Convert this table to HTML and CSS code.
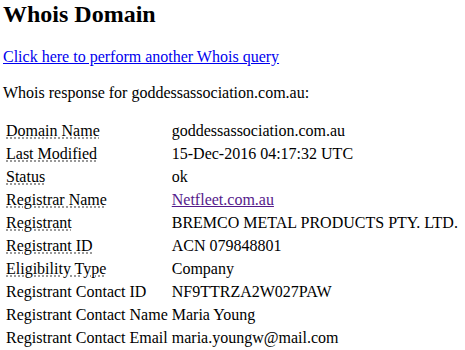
FILE: index.html
```html
<!DOCTYPE html>
<html lang="en">
<head>
<meta charset="utf-8">
<title>Whois Domain</title>
<link rel="stylesheet" href="styles.css">
</head>
<body class="page">
<h1 class="title">Whois Domain</h1>
<p class="query"><a class="query-link" href="#">Click here to perform another Whois query</a></p>
<p class="intro">Whois response for goddessassociation.com.au:</p>
<table class="whois">
<tbody>
<tr><td class="key"><abbr class="term" title="Domain Name">Domain Name</abbr></td><td class="val">goddessassociation.com.au</td></tr>
<tr><td class="key"><abbr class="term" title="Last Modified">Last Modified</abbr></td><td class="val">15-Dec-2016 04:17:32 UTC</td></tr>
<tr><td class="key"><abbr class="term" title="Status">Status</abbr></td><td class="val">ok</td></tr>
<tr><td class="key"><abbr class="term" title="Registrar Name">Registrar Name</abbr></td><td class="val"><a class="visited-link" href="#">Netfleet.com.au</a></td></tr>
<tr><td class="key"><abbr class="term" title="Registrant">Registrant</abbr></td><td class="val">BREMCO METAL PRODUCTS PTY. LTD.</td></tr>
<tr><td class="key"><abbr class="term" title="Registrant ID">Registrant ID</abbr></td><td class="val">ACN 079848801</td></tr>
<tr><td class="key"><abbr class="term" title="Eligibility Type">Eligibility Type</abbr></td><td class="val">Company</td></tr>
<tr><td class="key">Registrant Contact ID</td><td class="val">NF9TTRZA2W027PAW</td></tr>
<tr><td class="key">Registrant Contact Name</td><td class="val">Maria Young</td></tr>
<tr><td class="key">Registrant Contact Email</td><td class="val">maria.youngw@mail.com</td></tr>
</tbody>
</table>
</body>
</html>
```
FILE: styles.css
```css
html, body {
  background: #ffffff;
}
.page {
  margin: 0;
  padding: 0 3px;
  font-family: "Liberation Serif", "Times New Roman", serif;
  font-size: 16px;
  color: #000000;
}
.title {
  margin: 0 0 20px;
  padding-top: 1px;
  font-size: 24px;
  line-height: 26px;
  font-weight: bold;
}
.query {
  margin: 0 0 17px;
  line-height: 19px;
}
.query-link {
  color: #0000ee;
  text-decoration: underline;
}
.intro {
  margin: 0 0 16px;
  line-height: 19px;
}
.whois {
  border-collapse: separate;
  border-spacing: 2px;
  margin-left: 0;
}
.whois td {
  padding: 1px;
  line-height: 19px;
  vertical-align: top;
  white-space: nowrap;
}
.key {
  padding-right: 3px;
}
.term {
  text-decoration: underline dotted #808080;
  text-underline-offset: 2px;
}
.visited-link {
  color: #551a8b;
  text-decoration: underline;
}
```
